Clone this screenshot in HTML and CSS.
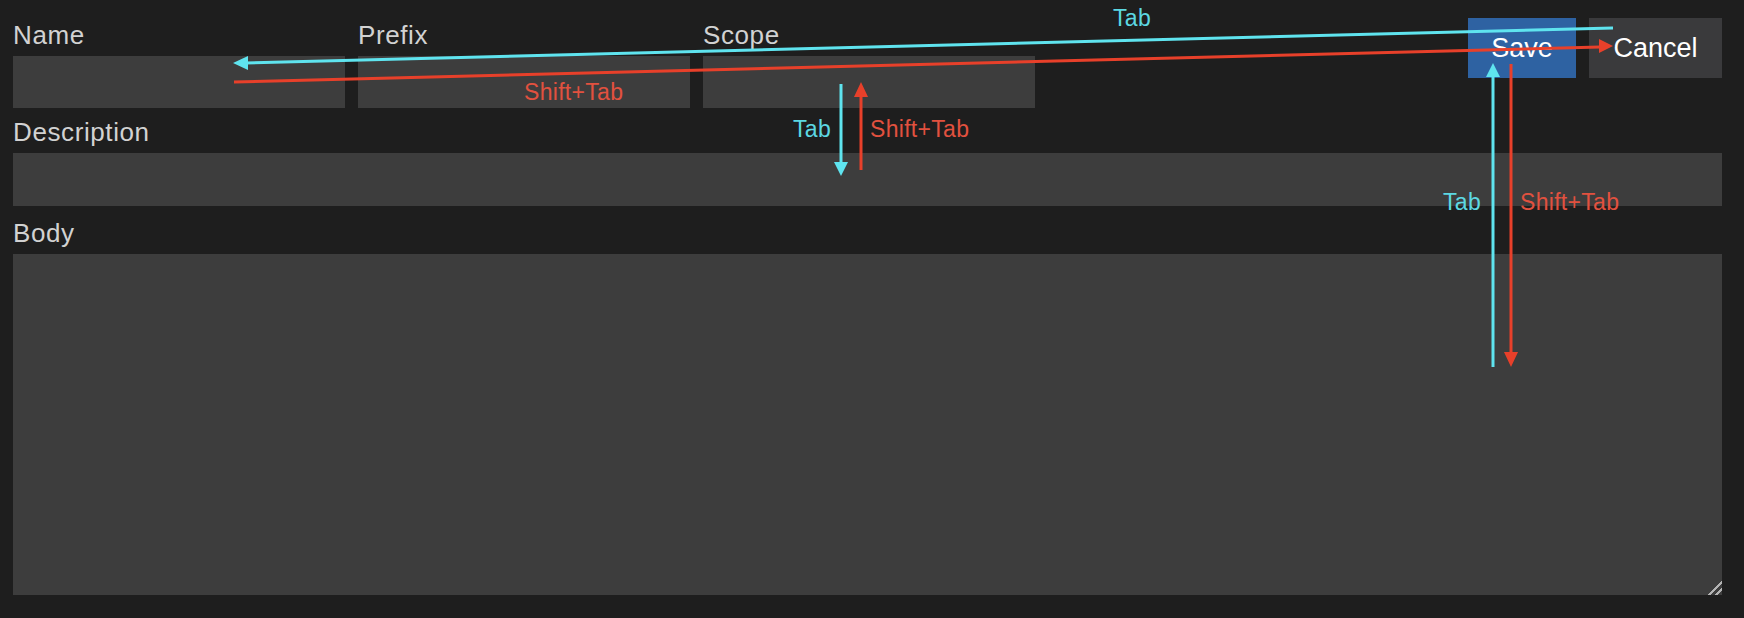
FILE: index.html
```html
<!DOCTYPE html>
<html lang="en">
<head>
    <meta charset="UTF-8">
    <meta name="viewport" content="width=device-width, initial-scale=1.0">
    <title>Snippet editor</title>
    <link rel="stylesheet" href="styles.css">
</head>
<body>

    <form class="editor">
        <div class="top-row">
            <div class="field short">
                <label for="name">Name</label>
                <input id="name" type="text">
            </div>
            <div class="field short">
                <label for="prefix">Prefix</label>
                <input id="prefix" type="text">
            </div>
            <div class="field short">
                <label for="scope">Scope</label>
                <input id="scope" type="text">
            </div>
            <div class="actions">
                <button type="button" class="btn save">Save</button>
                <button type="button" class="btn cancel">Cancel</button>
            </div>
        </div>

        <div class="field description">
            <label for="description">Description</label>
            <input id="description" type="text">
        </div>

        <div class="field body-field">
            <label for="body">Body</label>
            <textarea id="body"></textarea>
        </div>
    </form>

    <!-- tab order notes drawn over the form -->
    <svg class="notes" width="1744" height="618" viewBox="0 0 1744 618">
        <g class="tab">
            <line x1="1613" y1="28" x2="246" y2="63"/>
            <polygon points="233,63 248,56 248,70"/>
            <line x1="841" y1="84" x2="841" y2="163"/>
            <polygon points="834,162 848,162 841,176"/>
            <line x1="1493" y1="367" x2="1493" y2="76"/>
            <polygon points="1486,77 1500,77 1493,63"/>
        </g>
        <g class="shift-tab">
            <line x1="234" y1="82" x2="1600" y2="47"/>
            <polygon points="1613,46 1599,39 1599,53"/>
            <line x1="861" y1="170" x2="861" y2="96"/>
            <polygon points="854,97 868,97 861,82"/>
            <line x1="1511" y1="64" x2="1511" y2="353"/>
            <polygon points="1504,352 1518,352 1511,367"/>
        </g>
        <text class="note tab-text" x="1113" y="26">Tab</text>
        <text class="note shift-text" x="524" y="100">Shift+Tab</text>
        <text class="note tab-text" x="793" y="137">Tab</text>
        <text class="note shift-text" x="870" y="137">Shift+Tab</text>
        <text class="note tab-text" x="1443" y="210">Tab</text>
        <text class="note shift-text" x="1520" y="210">Shift+Tab</text>
    </svg>

</body>
</html>
```

FILE: styles.css
```css
body{
    margin: 0;
    background-color: #1e1e1e;
    font-family: "Liberation Sans", Arial, sans-serif;
    color-scheme: dark;
    position: relative;
    width: 1744px;
    height: 618px;
    overflow: hidden;
}

.editor{
    display: flex;
    flex-direction: column;
    padding: 20px 22px 0 13px;
}

.top-row{
    display: flex;
    gap: 13px;
}

.field{
    display: flex;
    flex-direction: column;
}

.field label{
    font-size: 26px;
    letter-spacing: 0.6px;
    line-height: 30px;
    color: #d2d2d2;
    margin-bottom: 6px;
}

.field input,
.field textarea{
    background-color: #3d3d3d;
    border: none;
    outline: none;
    color: #e0e0e0;
    font: inherit;
    font-size: 20px;
    margin: 0;
    padding: 0 10px;
    box-sizing: border-box;
}

.field input{ height: 52px; }

.short{ width: 332px; }

.description{ margin-top: 9px; }
.description input{ height: 53px; }

.body-field{ margin-top: 12px; }
.body-field textarea{
    height: 341px;
    resize: both;
}

.body-field textarea::-webkit-resizer{
    background: linear-gradient(135deg,
        transparent 52%, #b4b4b4 52%, #b4b4b4 62%,
        transparent 62%, transparent 76%, #b4b4b4 76%,
        #b4b4b4 86%, transparent 86%);
}

.actions{
    margin-left: auto;
    margin-top: -2px;
    display: flex;
    gap: 13px;
    align-items: flex-start;
}

.btn{
    height: 60px;
    padding: 0 20px;
    border: none;
    font-family: "Liberation Sans", Arial, sans-serif;
    font-size: 27px;
    color: #ffffff;
    cursor: pointer;
}

.save{ background-color: #2e62a2; width: 108px; }
.cancel{ background-color: #3a3a3c; width: 133px; }

.notes{
    position: absolute;
    top: 0;
    left: 0;
    pointer-events: none;
}

.notes line{ stroke-width: 3; }
.tab line{ stroke: #5fe4ef; }
.tab polygon{ fill: #5fe4ef; }
.shift-tab line{ stroke: #e8402a; }
.shift-tab polygon{ fill: #e8402a; }

.note{
    font-family: "Liberation Sans", Arial, sans-serif;
    font-size: 23px;
    letter-spacing: 0.3px;
}
.tab-text{ fill: #5cd8e2; }
.shift-text{ fill: #e2513f; }
```
